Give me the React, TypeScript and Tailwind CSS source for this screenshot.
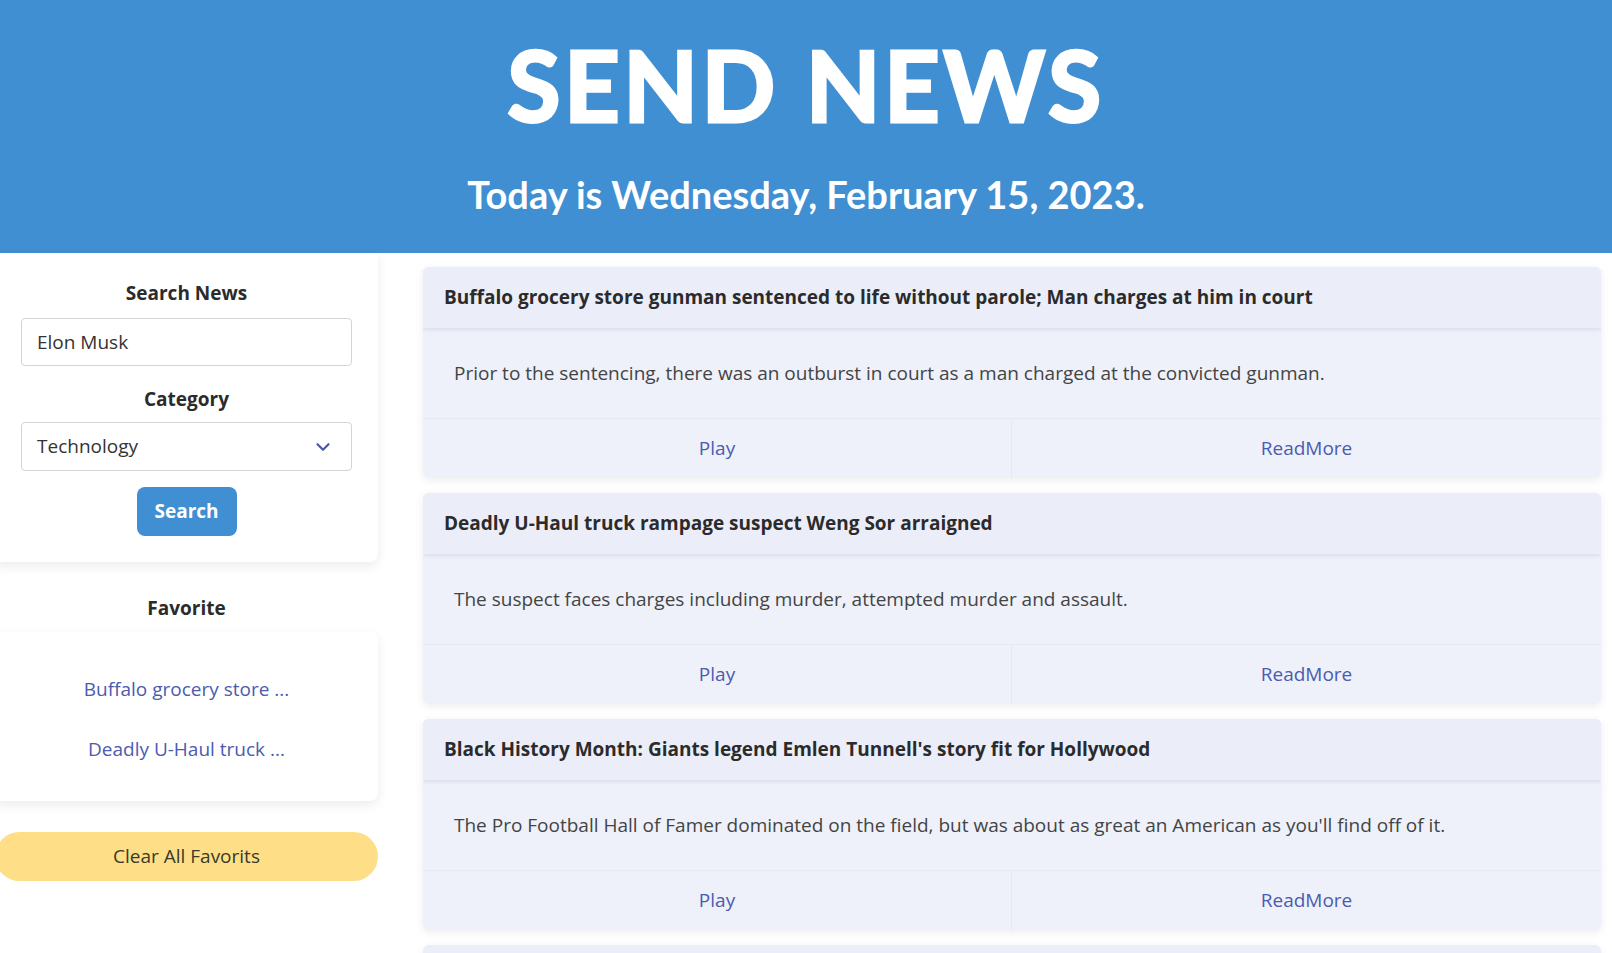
import { ChevronDown } from 'lucide-react';

const news = [
  {
    title: 'Buffalo grocery store gunman sentenced to life without parole; Man charges at him in court',
    desc: 'Prior to the sentencing, there was an outburst in court as a man charged at the convicted gunman.',
  },
  {
    title: 'Deadly U-Haul truck rampage suspect Weng Sor arraigned',
    desc: 'The suspect faces charges including murder, attempted murder and assault.',
  },
  {
    title: "Black History Month: Giants legend Emlen Tunnell's story fit for Hollywood",
    desc: "The Pro Football Hall of Famer dominated on the field, but was about as great an American as you'll find off of it.",
  },
];

function NewsCard({ title, desc }: { title: string; desc: string }) {
  return (
    <div className="bg-[#eef1fa] rounded-md shadow-[0_2px_8px_rgba(0,0,0,0.08)] overflow-hidden shrink-0">
      <div className="h-[61px] flex items-center px-[21px] bg-[#ebeef8] shadow-[0_2px_4px_rgba(0,0,0,0.08)] relative">
        <h3 className="text-[19px] font-bold text-[#2b2b2b] truncate">{title}</h3>
      </div>
      <div className="h-[90px] flex items-center px-[31px]">
        <p className="text-[19px] text-[#444]">{desc}</p>
      </div>
      <div className="h-[60px] grid grid-cols-2 border-t border-[#e6e9f3]">
        <button className="text-[19px] text-[#4b5bb0] border-r border-[#e6e9f3]">Play</button>
        <button className="text-[19px] text-[#4b5bb0]">ReadMore</button>
      </div>
    </div>
  );
}

export default function App() {
  return (
    <div className="bg-white font-['Open_Sans',sans-serif] overflow-hidden h-[953px]">
      <header className="h-[253px] bg-[#408fd2] flex flex-col items-center text-white">
        <h1 className="mt-[30px] text-[97px] leading-[110px] font-bold tracking-[3.5px] font-['Lato',sans-serif] [-webkit-text-stroke:3px_white]">
          SEND NEWS
        </h1>
        <p className="mt-[28px] text-[38px] leading-[52px] font-bold font-['Lato',sans-serif]">
          Today is Wednesday, February 15, 2023.
        </p>
      </header>

      <div className="flex gap-[45px]">
        <aside className="w-[383px] -ml-[5px] shrink-0 flex flex-col">
          <div className="bg-white rounded-br-lg shadow-[0_4px_12px_rgba(0,0,0,0.08)] py-[26px] px-[26px] flex flex-col items-center">
            <h2 className="text-[19px] leading-[28px] font-bold text-[#2b2b2b]">Search News</h2>
            <input
              defaultValue="Elon Musk"
              className="mt-[11px] w-full h-[48px] border border-[#d4d4d4] rounded-[4px] px-[15px] text-[19px] text-[#333] outline-none"
            />
            <h2 className="mt-[19px] text-[19px] leading-[28px] font-bold text-[#2b2b2b]">Category</h2>
            <div className="mt-[9px] w-full h-[49px] border border-[#d4d4d4] rounded-[4px] px-[15px] flex items-center justify-between">
              <span className="text-[19px] text-[#333]">Technology</span>
              <ChevronDown size={22} strokeWidth={2.4} className="text-[#4b55ad] mr-[2px]" />
            </div>
            <button className="mt-[16px] w-[100px] h-[49px] rounded-lg bg-[#408fd2] text-white text-[19px] font-bold">
              Search
            </button>
          </div>

          <h2 className="mt-[32px] text-center text-[19px] leading-[28px] font-bold text-[#2b2b2b]">Favorite</h2>
          <div className="mt-[10px] h-[169px] bg-white rounded-r-lg shadow-[0_4px_12px_rgba(0,0,0,0.08)] flex flex-col items-center pt-[43px] gap-[32px]">
            <a className="text-[19px] leading-[28px] text-[#4b5bb0]">Buffalo grocery store ...</a>
            <a className="text-[19px] leading-[28px] text-[#4b5bb0]">Deadly U-Haul truck ...</a>
          </div>

          <button className="mt-[31px] h-[49px] w-full rounded-full bg-[#fedf88] text-[19px] text-[#3a3a2a]">
            Clear All Favorits
          </button>
        </aside>

        <main className="flex-1 pt-[14px] pr-[11px] flex flex-col gap-[15px]">
          {news.map((n) => (
            <NewsCard key={n.title} title={n.title} desc={n.desc} />
          ))}
          <div className="h-[61px] bg-[#ebeef8] rounded-md shadow-[0_2px_8px_rgba(0,0,0,0.08)] shrink-0" />
        </main>
      </div>
    </div>
  );
}
